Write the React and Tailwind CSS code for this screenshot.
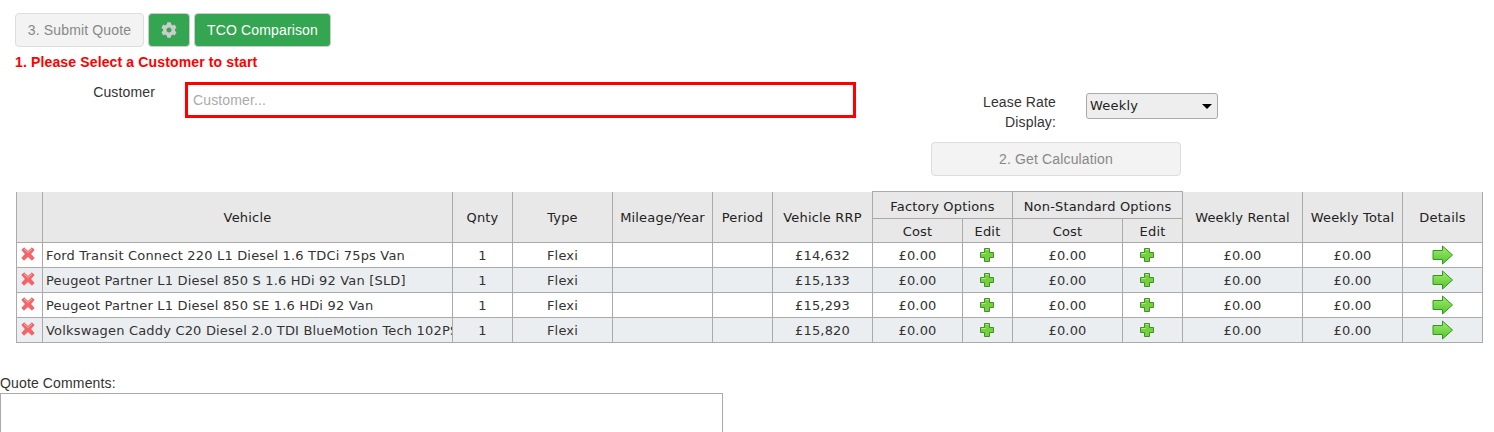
import React from 'react';
import { FaCog } from 'react-icons/fa';

const rows = [
  ['Ford Transit Connect 220 L1 Diesel 1.6 TDCi 75ps Van', '£14,632'],
  ['Peugeot Partner L1 Diesel 850 S 1.6 HDi 92 Van [SLD]', '£15,133'],
  ['Peugeot Partner L1 Diesel 850 SE 1.6 HDi 92 Van', '£15,293'],
  ['Volkswagen Caddy C20 Diesel 2.0 TDI BlueMotion Tech 102PS', '£15,820'],
];

const RemoveIcon = () => (
  <svg width="14" height="14" viewBox="0 0 14 14" className="block">
    <path d="M0.8 3 L3 0.8 L7 4.4 L11 0.8 L13.2 3 L9.6 7 L13.2 11 L11 13.2 L7 9.6 L3 13.2 L0.8 11 L4.4 7 Z" fill="#f4656a" stroke="#ec5257" strokeWidth="0.8" />
    <path d="M3 2 L7 5.6 L11 2" fill="none" stroke="#fbb" strokeWidth="0.8" />
  </svg>
);

const PlusIcon = () => (
  <svg width="16" height="16" viewBox="0 0 16 16" className="block">
    <path d="M5.5 1.5 H10.5 V5.5 H14.5 V10.5 H10.5 V14.5 H5.5 V10.5 H1.5 V5.5 H5.5 Z" fill="#74d13c" stroke="#3f8f2a" strokeWidth="1" />
    <path d="M6.5 2.5 H9.5 M2.5 6.5 H6.5" stroke="#b4ec8c" strokeWidth="1" />
  </svg>
);

const ArrowIcon = () => (
  <svg width="22" height="20" viewBox="0 0 22 20" className="block">
    <defs>
      <linearGradient id="arrowFill" x1="0" y1="0" x2="0" y2="1">
        <stop offset="0" stopColor="#a4ea6c" />
        <stop offset="1" stopColor="#52c62e" />
      </linearGradient>
    </defs>
    <path d="M1 5.5 H10.5 V1 L20.5 10 L10.5 19 V14.5 H1 Z" fill="url(#arrowFill)" stroke="#2f9a22" strokeWidth="1" />
  </svg>
);

const th = 'border border-[#aaa] bg-[#e8e8e8] font-normal text-center text-[13px] text-[#222]';
const spanTh = `${th} border-t-0 pt-1`;
const td = 'border border-[#aaa] text-center text-[13px] text-[#333] p-0';
const textTd = `${td} pt-[3px]`;

export default function App() {
  return (
    <div className="bg-white font-['Liberation_Sans',Arial,sans-serif] text-sm tracking-[0.14px] text-[#333] h-[432px] overflow-hidden">
      <div className="flex gap-1 pl-[15px] pt-[13px]">
        <button className="w-[129px] h-[34px] rounded border border-[#ddd] bg-[#f3f3f3] text-[#888]">3. Submit Quote</button>
        <button className="w-[42px] h-[34px] rounded border border-[#ccc] bg-[#34a550] flex items-center justify-center text-[#ccc]">
          <FaCog size={16} />
        </button>
        <button className="w-[137px] h-[34px] rounded border border-[#ccc] bg-[#34a550] text-white">TCO Comparison</button>
      </div>
      <p className="pl-[15px] mt-[7px] leading-[16px] font-bold text-[#f00]">1. Please Select a Customer to start</p>
      <div className="flex h-[107px] mt-2">
        <div className="w-[155px] pt-1 text-right leading-5">Customer</div>
        <div className="w-[671px] ml-[30px] mt-1 h-9 border-[3px] border-[#f00] pl-[5px] leading-[30px] text-[#aaa]">Customer...</div>
        <div className="ml-[75px] w-[362px]">
          <div className="flex">
            <div className="w-[125px] pt-[14px] text-right leading-5">Lease Rate Display:</div>
            <div className="ml-[30px] mt-[15px] w-[132px] h-[26px] rounded-[3px] border border-[#aaa] bg-[#eee] flex items-center justify-between pl-[3px] pr-[5px] font-['DejaVu_Sans',sans-serif] text-[13px] tracking-[0.2px] text-[#222]">
              Weekly
              <span className="w-0 h-0 border-x-[5px] border-t-[5px] border-x-transparent border-t-black" />
            </div>
          </div>
          <button className="w-[250px] h-[34px] mt-[10px] rounded border border-[#ddd] bg-[#f3f3f3] text-[#888]">2. Get Calculation</button>
        </div>
      </div>
      <div className="pl-4 pt-[6px] font-['DejaVu_Sans',sans-serif] tracking-[0.18px]">
        <table className="table-fixed border-collapse w-[1467px]">
          <colgroup>
            {[26, 410, 60, 100, 100, 60, 100, 90, 50, 110, 60, 120, 100, 80].map((w, i) => (
              <col key={i} style={{ width: w }} />
            ))}
          </colgroup>
          <thead>
            <tr className="h-[27px]">
              <th rowSpan={2} className={spanTh} />
              <th rowSpan={2} className={spanTh}>Vehicle</th>
              <th rowSpan={2} className={spanTh}>Qnty</th>
              <th rowSpan={2} className={spanTh}>Type</th>
              <th rowSpan={2} className={spanTh}>Mileage/Year</th>
              <th rowSpan={2} className={spanTh}>Period</th>
              <th rowSpan={2} className={spanTh}>Vehicle RRP</th>
              <th colSpan={2} className={`${th} pt-1`}>Factory Options</th>
              <th colSpan={2} className={`${th} pt-1`}>Non-Standard Options</th>
              <th rowSpan={2} className={spanTh}>Weekly Rental</th>
              <th rowSpan={2} className={spanTh}>Weekly Total</th>
              <th rowSpan={2} className={spanTh}>Details</th>
            </tr>
            <tr className="h-6">
              <th className={`${th} pt-[3px]`}>Cost</th>
              <th className={`${th} pt-[3px]`}>Edit</th>
              <th className={`${th} pt-[3px]`}>Cost</th>
              <th className={`${th} pt-[3px]`}>Edit</th>
            </tr>
          </thead>
          <tbody>
            {rows.map(([name, rrp], i) => (
              <tr key={name} className={`h-[25px] ${i % 2 ? 'bg-[#ebeef1]' : 'bg-white'}`}>
                <td className={td}>
                  <span className="flex justify-center pr-[3px] -mt-[3px]"><RemoveIcon /></span>
                </td>
                <td className={`${textTd} text-left`}>
                  <div className="pl-[3px] whitespace-nowrap overflow-hidden">{name}</div>
                </td>
                <td className={textTd}>1</td>
                <td className={textTd}>Flexi</td>
                <td className={td} />
                <td className={td} />
                <td className={textTd}>{rrp}</td>
                <td className={textTd}>£0.00</td>
                <td className={td}><span className="flex justify-center pr-[2px]"><PlusIcon /></span></td>
                <td className={textTd}>£0.00</td>
                <td className={td}><span className="flex justify-center pr-3"><PlusIcon /></span></td>
                <td className={textTd}>£0.00</td>
                <td className={textTd}>£0.00</td>
                <td className={td}><span className="flex justify-center"><ArrowIcon /></span></td>
              </tr>
            ))}
          </tbody>
        </table>
      </div>
      <div className="mt-[32px] leading-4">Quote Comments:</div>
      <div className="w-[723px] h-[60px] mt-[2px] border border-[#aaa]" />
    </div>
  );
}
